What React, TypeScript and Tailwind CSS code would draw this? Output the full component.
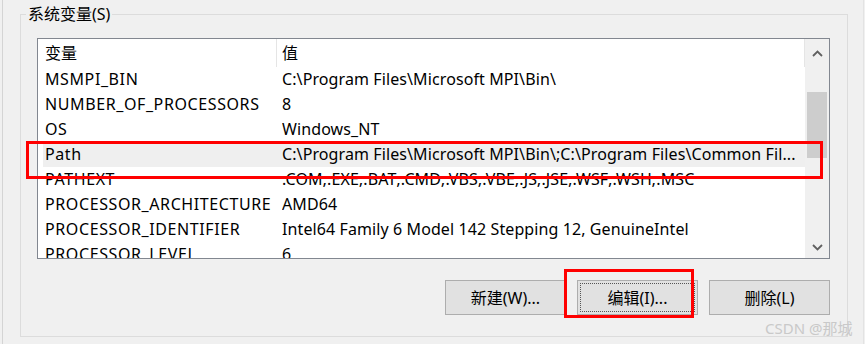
import React from 'react';

const rows = [
  { name: 'MSMPI_BIN', value: 'C:\\Program Files\\Microsoft MPI\\Bin\\' },
  { name: 'NUMBER_OF_PROCESSORS', value: '8' },
  { name: 'OS', value: 'Windows_NT' },
  { name: 'Path', value: 'C:\\Program Files\\Microsoft MPI\\Bin\\;C:\\Program Files\\Common Fil...', selected: true },
  { name: 'PATHEXT', value: '.COM;.EXE;.BAT;.CMD;.VBS;.VBE;.JS;.JSE;.WSF;.WSH;.MSC' },
  { name: 'PROCESSOR_ARCHITECTURE', value: 'AMD64' },
  { name: 'PROCESSOR_IDENTIFIER', value: 'Intel64 Family 6 Model 142 Stepping 12, GenuineIntel' },
  { name: 'PROCESSOR_LEVEL', value: '6' },
];

function Chevron({ down }: { down?: boolean }) {
  return (
    <svg width="11" height="7" viewBox="0 0 11 7" className={down ? 'rotate-180' : ''}>
      <path d="M1 6 L5.5 1.5 L10 6" fill="none" stroke="#606060" strokeWidth="1.8" />
    </svg>
  );
}

function Button({ label, focused }: { label: string; focused?: boolean }) {
  return (
    <div
      className={
        'w-[121px] h-[35px] flex items-center justify-center bg-[#e1e1e1] border border-[#adadad] text-[16px] text-black ' +
        (focused ? 'outline-dotted outline-1 outline-[#555] outline-offset-[-4px]' : '')
      }
    >
      {label}
    </div>
  );
}

export default function App() {
  return (
    <div
      className="relative w-[865px] h-[344px] bg-[#f0f0f0] overflow-hidden flex text-black"
      style={{ fontFamily: '"Noto Sans", "Noto Sans CJK SC", sans-serif' }}
    >
      <div className="w-[3px] h-full border-r border-[#d4d4d4]" />

      {/* group box */}
      <div className="ml-[17px] mt-[14px] w-[828px] h-[323px] border border-[#dcdcdc] relative">
        <span className="absolute left-[5px] top-[-12px] px-[2px] bg-[#f0f0f0] text-[16px] leading-[22px]">
          系统变量(S)
        </span>

        <div className="pt-[23px] pl-[16px]">
          {/* list view */}
          <div className="w-[793px] h-[221px] border border-[#828790] bg-white flex overflow-hidden">
            <div className="w-[767px] flex flex-col text-[16px]">
              <div className="h-[28px] flex items-center leading-[28px] border-r border-[#e5e5e5]">
                <div className="w-[239px] pl-[7px] border-r border-[#e5e5e5]">变量</div>
                <div className="pl-[5px]">值</div>
              </div>
              {rows.map((r) => (
                <div
                  key={r.name}
                  className={'ml-[5px] h-[25px] shrink-0 flex leading-[25px] whitespace-nowrap ' + (r.selected ? 'bg-[#efefef]' : '')}
                >
                  <div className="w-[239px] pl-[2px] tracking-[0.6px]">{r.name}</div>
                  <div className="flex-1 overflow-hidden tracking-[0.1px]">{r.value}</div>
                </div>
              ))}
            </div>

            {/* scrollbar */}
            <div className="w-[24px] bg-[#f0f0f0] flex flex-col">
              <div className="h-[28px] flex items-center justify-center">
                <Chevron />
              </div>
              <div className="mt-[25px] mx-[2px] h-[66px] bg-[#cdcdcd]" />
              <div className="mt-auto h-[22px] flex items-center justify-center">
                <Chevron down />
              </div>
            </div>
          </div>

          <div className="mt-[21px] w-[793px] flex justify-end gap-[11px]">
            <Button label="新建(W)..." />
            <Button label="编辑(I)..." focused />
            <Button label="删除(L)" />
          </div>
        </div>
      </div>

      <div className="ml-[15px] w-px h-full bg-[#e3e3e3]" />

      {/* annotations */}
      <div className="absolute left-[26px] top-[141px] w-[797px] h-[38px] border-[3px] border-[#ff0000]" />
      <div className="absolute left-[564px] top-[269px] w-[130px] h-[49px] border-[3px] border-[#ff0000]" />
      <div className="absolute left-[765px] top-[318px] text-[15px] leading-[20px] text-[#c9c9c9]">CSDN @那城</div>
    </div>
  );
}
